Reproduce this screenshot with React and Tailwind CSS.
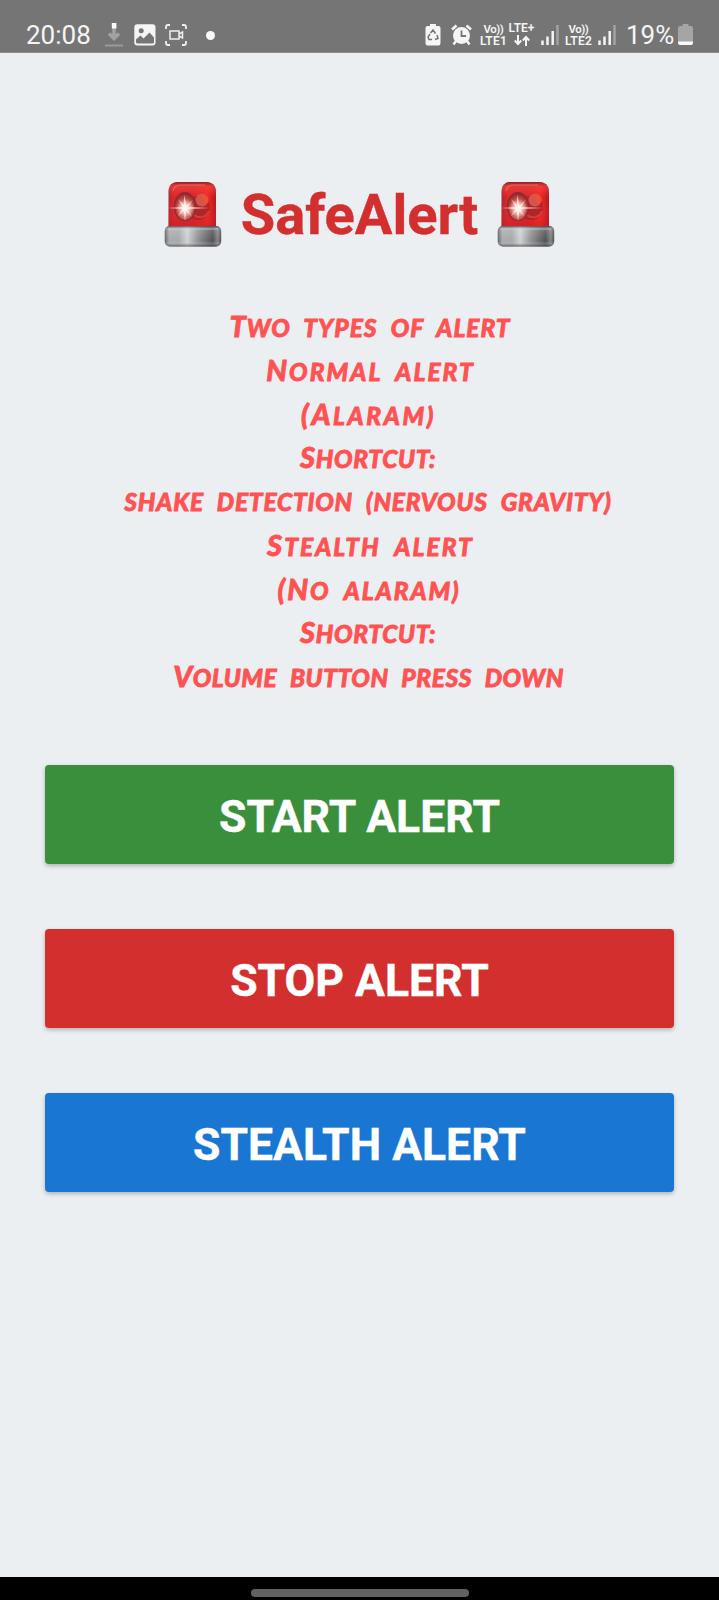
import React from 'react';

const instructions = [
  { text: 'Two types of alert', style: 'pl-[21px] tracking-[1px] [word-spacing:7px] first-letter:text-[29px]' },
  { text: 'Normal alert', style: 'pl-[22px] tracking-[2.050px] [word-spacing:7px] first-letter:text-[29px]' },
  { text: '(Alaram)', style: 'pl-[18px] tracking-[2.600px] first-letter:text-[29px]' },
  { text: 'Shortcut:', style: 'pl-[17px] tracking-[0.650px] first-letter:text-[29px]' },
  { text: 'shake detection (nervous gravity)', style: 'pl-[17px] pt-[1px] tracking-[0.780px] [word-spacing:7px]' },
  { text: 'Stealth alert', style: 'pl-[22px] tracking-[2.050px] [word-spacing:7px] first-letter:text-[29px]' },
  { text: '(No alaram)', style: 'pl-[19px] tracking-[1.900px] [word-spacing:7px] first-letter:text-[29px]' },
  { text: 'Shortcut:', style: 'pl-[17px] tracking-[0.650px] first-letter:text-[29px]' },
  { text: 'Volume button press down', style: 'pl-[18px] tracking-[0.540px] [word-spacing:7px] first-letter:text-[29px]' },
];

const actions = [
  { label: 'START ALERT', color: 'bg-[#3a8f3d]' },
  { label: 'STOP ALERT', color: 'bg-[#d32f2f]' },
  { label: 'STEALTH ALERT', color: 'bg-[#1976d3]' },
];

function Siren({ id }) {
  return (
    <svg width="58" height="66" viewBox="0 0 58 66" className="shrink-0">
      <defs>
        <linearGradient id={id + 'dome'} x1="0" x2="1" y1="0" y2="0">
          <stop offset="0" stopColor="#a52a30" />
          <stop offset="0.12" stopColor="#d8262a" />
          <stop offset="0.5" stopColor="#d42427" />
          <stop offset="0.82" stopColor="#f62624" />
          <stop offset="1" stopColor="#a81c1f" />
        </linearGradient>
        <linearGradient id={id + 'top'} x1="0" x2="0" y1="0" y2="1">
          <stop offset="0" stopColor="#7c2027" stopOpacity="0.9" />
          <stop offset="0.1" stopColor="#ef4a42" stopOpacity="0.6" />
          <stop offset="0.35" stopColor="#ff4040" stopOpacity="0" />
          <stop offset="1" stopColor="#c81c20" stopOpacity="0.5" />
        </linearGradient>
        <linearGradient id={id + 'base'} x1="0" x2="1" y1="0" y2="0">
          <stop offset="0" stopColor="#606164" />
          <stop offset="0.08" stopColor="#a9aaac" />
          <stop offset="0.25" stopColor="#a7a8aa" />
          <stop offset="0.4" stopColor="#d0d1d2" />
          <stop offset="0.58" stopColor="#929395" />
          <stop offset="0.85" stopColor="#505154" />
          <stop offset="0.94" stopColor="#838486" />
          <stop offset="1" stopColor="#4c4d50" />
        </linearGradient>
        <linearGradient id={id + 'rim'} x1="0" x2="0" y1="0" y2="1">
          <stop offset="0" stopColor="#3d3e42" stopOpacity="0.8" />
          <stop offset="0.2" stopColor="#fff" stopOpacity="0.15" />
          <stop offset="0.75" stopColor="#fff" stopOpacity="0" />
          <stop offset="1" stopColor="#303135" stopOpacity="0.7" />
        </linearGradient>
        <radialGradient id={id + 'lamp'} cx="0.5" cy="0.6" r="0.55">
          <stop offset="0" stopColor="#fff3ee" />
          <stop offset="0.3" stopColor="#e59a93" />
          <stop offset="0.75" stopColor="#bd4643" />
          <stop offset="1" stopColor="#94282b" />
        </radialGradient>
        <radialGradient id={id + 'glow'}>
          <stop offset="0" stopColor="#fff" />
          <stop offset="0.35" stopColor="#ffe9e4" stopOpacity="0.8" />
          <stop offset="1" stopColor="#ffb5a8" stopOpacity="0" />
        </radialGradient>
      </defs>
      <path d="M4.500 47V11C4.500 4.500 8 1 14 1H42C48 1 52 4.500 52 11V47Z" fill={'url(#' + id + 'dome)'} />
      <path d="M4.500 47V11C4.500 4.500 8 1 14 1H42C48 1 52 4.500 52 11V47Z" fill={'url(#' + id + 'top)'} />
      <path d="M9 10C10 5.500 12 4 16 4H41" fill="none" stroke="#ff8d83" strokeWidth="1.500" opacity="0.4" />
      <circle cx="34" cy="27" r="12" fill="#b32427" />
      <path d="M30 34C35 38 42 37 45 30" fill="none" stroke="#e0524a" strokeWidth="2" opacity="0.6" />
      <circle cx="38" cy="19" r="6.500" fill="#d35550" />
      <path d="M37 14C41 13 45 17 43.500 21C43 24 41 23 40 22" fill="#f5502c" opacity="0.8" />
      <ellipse cx="21" cy="25.500" rx="10.500" ry="14" fill={'url(#' + id + 'lamp)'} stroke="#8f2a2e" strokeWidth="1.200" />
      <circle cx="21.500" cy="27" r="9" fill={'url(#' + id + 'glow)'} />
      <path d="M4 27L19.500 26L20.500 14L22.500 26L46 27L22.500 28L21 40L19.500 28ZM14 18L21.500 26L29 18.500L22.500 27.500L28 36L21 28.500L14 35L19.500 27Z" fill="#fff3ee" opacity="0.8" />
      <rect x="0.700" y="45" width="56.500" height="20.500" rx="5" fill={'url(#' + id + 'base)'} />
      <rect x="0.700" y="45" width="56.500" height="20.500" rx="5" fill={'url(#' + id + 'rim)'} />
      <path d="M4 48H54" stroke="#d7d8da" strokeWidth="1.500" opacity="0.4" />
    </svg>
  );
}

function Signal() {
  return (
    <svg width="20" height="20" viewBox="0 0 20 20" className="shrink-0">
      <path d="M2.500 15.500V20M7.500 11.500V20M12.700 6V20" stroke="#f5f5f5" strokeWidth="2.500" />
      <path d="M17.500 0V20" stroke="#a2a2a2" strokeWidth="2.500" />
    </svg>
  );
}

function NetworkLabel({ line }) {
  return (
    <div className="flex w-[27px] shrink-0 flex-col items-center text-[12px] font-semibold">
      <span className="h-[12px] text-[11.500px] leading-[12px] tracking-[-0.500px]">Vo))</span>
      <span className="h-[12px] leading-[12px] tracking-[0.200px] whitespace-nowrap">{line}</span>
    </div>
  );
}

function StatusBar() {
  return (
    <header className="flex h-[52px] w-full items-start bg-[#757575] pl-[26px] text-[#f5f5f5] shadow-[0_1px_0_#8b8c8d]">
      <time className="mt-[21px] w-[66px] text-[26px] leading-[28px]">20:08</time>
      <svg width="20" height="26" viewBox="0 0 20 26" className="mt-[22px] ml-[12px]">
        <path d="M10 6V15M5 11.500L10 16.500L15 11.500" fill="none" stroke="#a2a2a2" strokeWidth="3.500" />
        <path d="M1 23.500H19" stroke="#9a9a9a" strokeWidth="2" />
        <rect x="7.800" y="1" width="4.600" height="5.500" fill="#fafafa" />
      </svg>
      <svg width="22" height="22" viewBox="0 0 22 22" className="mt-[24px] ml-[10px]">
        <rect x="0.300" y="0.300" width="21.200" height="21.200" rx="3" fill="#f5f5f5" />
        <circle cx="7.200" cy="6.800" r="2.500" fill="#757575" />
        <path d="M2 18V15.500L6.500 11.500L9.500 14.500L15.500 8.500L20 13.500V18Q20 19.500 18.500 19.500H3.500Q2 19.500 2 18Z" fill="#757575" />
      </svg>
      <svg width="22" height="22" viewBox="0 0 22 22" className="mt-[24px] ml-[9px]" fill="none" stroke="#f0f0f0" strokeWidth="1.800">
        <path d="M1 5V3Q1 1 3 1H5M17 1H19Q21 1 21 3V5M21 17V19Q21 21 19 21H17M5 21H3Q1 21 1 19V17" />
        <path d="M5 7H14V15H5ZM14 10L17.500 8V14L14 12" strokeWidth="1.500" />
      </svg>
      <span className="mt-[31px] ml-[19px] size-[9px] rounded-full bg-[#f8f8f8]" />
      <div className="mr-[25px] ml-auto flex items-start">
        <svg width="16" height="22" viewBox="0 0 16 22" className="mt-[24px]">
          <path d="M5 0H11V2H13.500Q15.500 2 15.500 4V19Q15.500 21.500 13.500 21.500H2.500Q0.500 21.500 0.500 19V4Q0.500 2 2.500 2H5Z" fill="#f5f5f5" />
          <path d="M5.500 9L8 6L10.500 9.500M12 11L13 14.500L10 15.500M7 15.500H4L3 13L5 10" fill="none" stroke="#757575" strokeWidth="1.500" />
        </svg>
        <svg width="22" height="22" viewBox="0 0 22 22" className="mt-[24px] ml-[10px]">
          <circle cx="10.500" cy="11.500" r="8.500" fill="#f5f5f5" />
          <path d="M1 5.500L5.500 1.500M15.500 1.500L20 5.500M5 17L2.500 20.500M16 17L18.500 20.500" stroke="#f5f5f5" strokeWidth="2.500" />
          <path d="M10.500 6.500V12H15" fill="none" stroke="#757575" strokeWidth="1.800" />
        </svg>
        <div className="mt-[23px] ml-[7px]"><NetworkLabel line="LTE1" /></div>
        <div className="mt-[22px] ml-[1px] flex w-[27px] flex-col items-center text-[12px] leading-[12px] font-semibold">
          <span>LTE+</span>
          <svg width="16" height="11" viewBox="0 0 16 11" fill="none" stroke="#f5f5f5" strokeWidth="2" className="mt-[1px]">
            <path d="M4 0V9M0.800 5.500L4 9L7.200 5.500M12 11V2M8.800 5.500L12 2L15.200 5.500" />
          </svg>
        </div>
        <div className="mt-[25px] ml-[5px]"><Signal /></div>
        <div className="mt-[23px] ml-[5px]"><NetworkLabel line="LTE2" /></div>
        <div className="mt-[25px] ml-[5px]"><Signal /></div>
        <span className="mt-[21px] ml-[9px] w-[49px] text-[26px] leading-[28px]">19%</span>
        <svg width="15" height="22" viewBox="0 0 15 22" className="mt-[24px] mr-[1px] ml-[3px]">
          <path d="M4.500 0H10.500V2H13Q15 2 15 4V18H0V4Q0 2 2 2H4.500Z" fill="#a5a5a5" />
          <path d="M0 17.500H15V19Q15 21 13 21H2Q0 21 0 19Z" fill="#fafafa" />
        </svg>
      </div>
    </header>
  );
}

export default function App() {
  return (
    <div className="flex h-[1600px] w-[719px] flex-col overflow-hidden bg-[#ebeff2] font-[Roboto,sans-serif]">
      <StatusBar />
      <main className="flex flex-1 flex-col items-center">
        <h1 className="mt-[128px] flex h-[68px] items-center text-[56px] leading-[66px] font-bold text-[#d32f2f]">
          <Siren id="left" />
          <span className="mx-[19px] pt-[1px] whitespace-nowrap [-webkit-text-stroke:0.400px_#d32f2f]">SafeAlert</span>
          <Siren id="right" />
        </h1>
        <section className="mt-[56px] flex w-full flex-col text-center font-[Lato,sans-serif] text-[24.500px] font-black text-[#ff5252] uppercase italic [-webkit-text-stroke:0.800px_#ff5252]">
          {instructions.map((item, index) => (
            <p key={index} className={'h-[43.750px] leading-[43.750px] whitespace-nowrap ' + item.style}>{item.text}</p>
          ))}
        </section>
        <div className="mt-[67px] flex w-full flex-col gap-[64.500px] px-[45px]">
          {actions.map((action) => (
            <button
              key={action.label}
              className={'h-[99.500px] w-full rounded-[4px] pt-[6px] text-[44.500px] leading-none font-bold text-white shadow-[0_2px_4px_rgba(0,0,0,0.25)] [-webkit-text-stroke:0.400px_white] ' + action.color}
            >
              {action.label}
            </button>
          ))}
        </div>
      </main>
      <footer className="flex h-[23px] justify-center bg-black pt-[12px]">
        <div className="h-[8px] w-[218px] rounded-full bg-[#606060]" />
      </footer>
    </div>
  );
}
